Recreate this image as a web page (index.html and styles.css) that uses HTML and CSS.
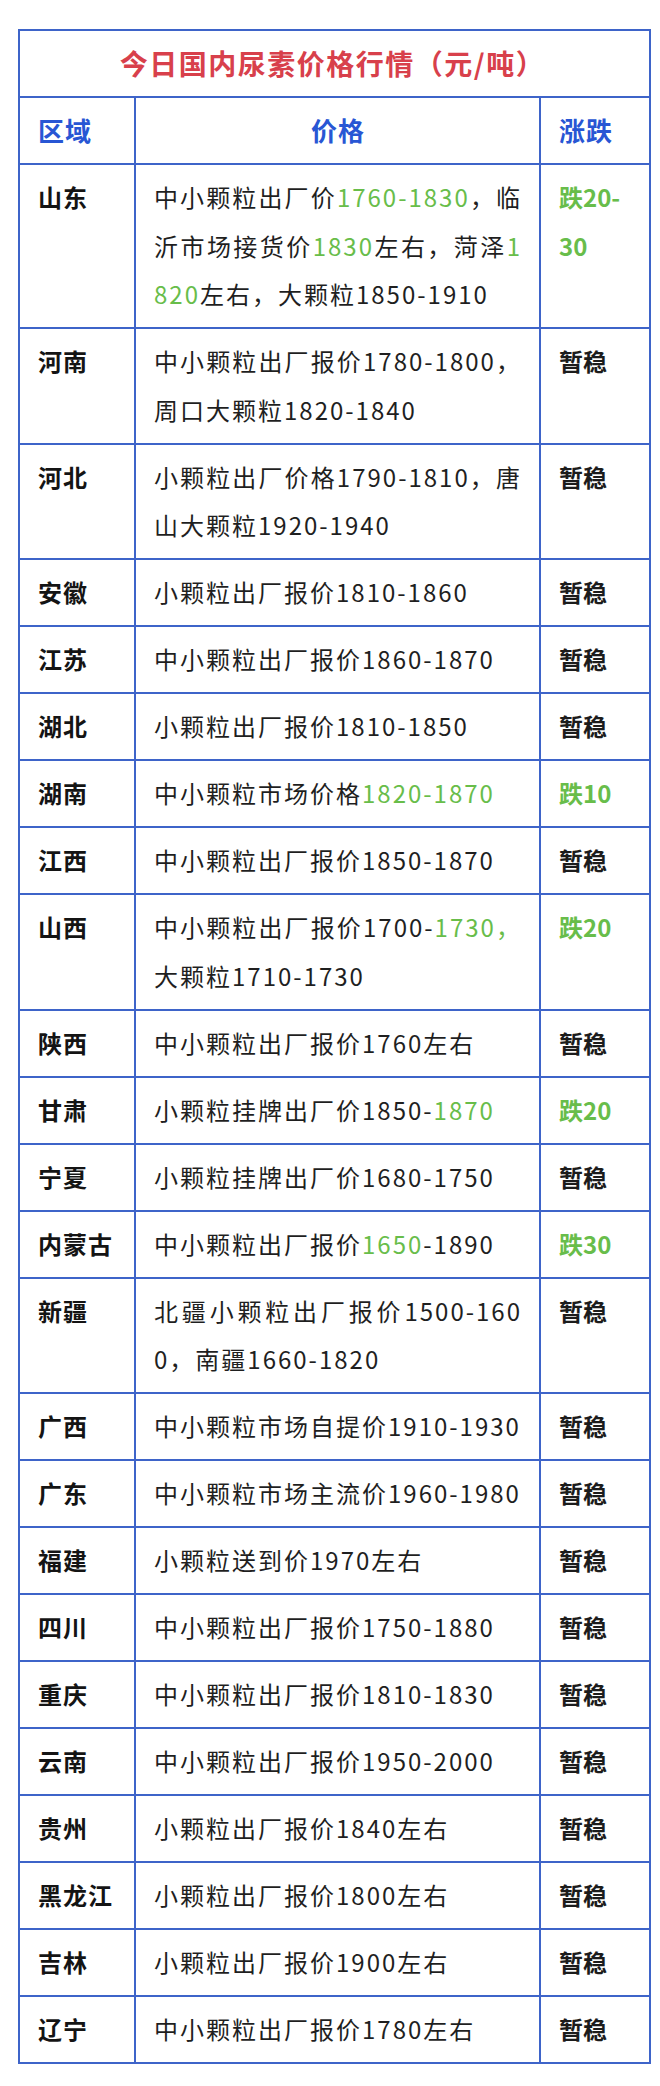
FILE: index.html
```html
<!DOCTYPE html>
<html lang="zh-CN">
<head>
<meta charset="utf-8">
<title>今日国内尿素价格行情</title>
<link rel="stylesheet" href="styles.css">
</head>
<body>
<div class="page">
<table class="price-table">
  <colgroup>
    <col class="c-region">
    <col class="c-price">
    <col class="c-change">
  </colgroup>
  <thead>
    <tr><th colspan="3" class="title">今日国内尿素价格行情（元/吨）</th></tr>
    <tr class="head">
      <th class="h-left">区域</th>
      <th class="h-center">价格</th>
      <th class="h-left">涨跌</th>
    </tr>
  </thead>
  <tbody>
    <tr><td class="region">山东</td><td class="price"><span class="ln">中小颗粒出厂价<span class="g">1760-1830</span>，临</span><span class="ln">沂市场接货价<span class="g">1830</span>左右，菏泽<span class="g">1</span></span><span class="g">820</span>左右，大颗粒1850-1910</td><td class="change down">跌20-<br>30</td></tr>
    <tr><td class="region">河南</td><td class="price"><span class="ln">中小颗粒出厂报价1780-1800，</span>周口大颗粒1820-1840</td><td class="change">暂稳</td></tr>
    <tr><td class="region">河北</td><td class="price"><span class="ln">小颗粒出厂价格1790-1810，唐</span>山大颗粒1920-1940</td><td class="change">暂稳</td></tr>
    <tr><td class="region">安徽</td><td class="price">小颗粒出厂报价1810-1860</td><td class="change">暂稳</td></tr>
    <tr><td class="region">江苏</td><td class="price">中小颗粒出厂报价1860-1870</td><td class="change">暂稳</td></tr>
    <tr><td class="region">湖北</td><td class="price">小颗粒出厂报价1810-1850</td><td class="change">暂稳</td></tr>
    <tr><td class="region">湖南</td><td class="price">中小颗粒市场价格<span class="g">1820-1870</span></td><td class="change down">跌10</td></tr>
    <tr><td class="region">江西</td><td class="price">中小颗粒出厂报价1850-1870</td><td class="change">暂稳</td></tr>
    <tr><td class="region">山西</td><td class="price"><span class="ln">中小颗粒出厂报价1700-<span class="g">1730，</span></span>大颗粒1710-1730</td><td class="change down">跌20</td></tr>
    <tr><td class="region">陕西</td><td class="price">中小颗粒出厂报价1760左右</td><td class="change">暂稳</td></tr>
    <tr><td class="region">甘肃</td><td class="price">小颗粒挂牌出厂价1850-<span class="g">1870</span></td><td class="change down">跌20</td></tr>
    <tr><td class="region">宁夏</td><td class="price">小颗粒挂牌出厂价1680-1750</td><td class="change">暂稳</td></tr>
    <tr><td class="region">内蒙古</td><td class="price">中小颗粒出厂报价<span class="g">1650</span>-1890</td><td class="change down">跌30</td></tr>
    <tr><td class="region">新疆</td><td class="price"><span class="ln">北疆小颗粒出厂报价1500-160</span>0，南疆1660-1820</td><td class="change">暂稳</td></tr>
    <tr><td class="region">广西</td><td class="price">中小颗粒市场自提价1910-1930</td><td class="change">暂稳</td></tr>
    <tr><td class="region">广东</td><td class="price">中小颗粒市场主流价1960-1980</td><td class="change">暂稳</td></tr>
    <tr><td class="region">福建</td><td class="price">小颗粒送到价1970左右</td><td class="change">暂稳</td></tr>
    <tr><td class="region">四川</td><td class="price">中小颗粒出厂报价1750-1880</td><td class="change">暂稳</td></tr>
    <tr><td class="region">重庆</td><td class="price">中小颗粒出厂报价1810-1830</td><td class="change">暂稳</td></tr>
    <tr><td class="region">云南</td><td class="price">中小颗粒出厂报价1950-2000</td><td class="change">暂稳</td></tr>
    <tr><td class="region">贵州</td><td class="price">小颗粒出厂报价1840左右</td><td class="change">暂稳</td></tr>
    <tr><td class="region">黑龙江</td><td class="price">小颗粒出厂报价1800左右</td><td class="change">暂稳</td></tr>
    <tr><td class="region">吉林</td><td class="price">小颗粒出厂报价1900左右</td><td class="change">暂稳</td></tr>
    <tr><td class="region">辽宁</td><td class="price">中小颗粒出厂报价1780左右</td><td class="change">暂稳</td></tr>
  </tbody>
</table>
</div>
</body>
</html>
```

FILE: styles.css
```css
html, body {
  margin: 0;
  padding: 0;
  background: #ffffff;
}

body {
  font-family: "Noto Sans CJK SC", "Noto Sans", sans-serif;
  color: #1c1c1c;
}

.page {
  padding: 29px 0 0 18px;
}

.price-table {
  width: 633px;
  table-layout: fixed;
  border-collapse: separate;
  border-spacing: 0;
  border-top: 2px solid #3e64c9;
  border-left: 2px solid #3e64c9;
  box-sizing: border-box;
}

.c-region { width: 116px; }
.c-price { width: 405px; }
.c-change { width: 110px; }

.price-table th,
.price-table td {
  box-sizing: border-box;
  border-right: 2px solid #3e64c9;
  border-bottom: 2px solid #3e64c9;
  padding: 8px 17px 8.5px 18px;
  line-height: 48.5px;
  vertical-align: top;
  text-align: left;
}

.title {
  font-size: 28px;
  font-weight: 700;
  letter-spacing: 1.5px;
  color: #d8404b;
  text-align: center !important;
  padding-right: 22px !important;
}

.head th {
  font-size: 26px;
  font-weight: 700;
  letter-spacing: 1px;
  color: #2856d4;
}

.head .h-center {
  text-align: center;
}

.region {
  font-size: 24px;
  font-weight: 700;
  letter-spacing: 1px;
  color: #141414;
  white-space: nowrap;
}

.price {
  font-size: 24px;
  letter-spacing: 2px;
  color: #1f1f1f;
}

.price .ln {
  display: block;
  white-space: nowrap;
  text-align: justify;
  text-align-last: justify;
}

.change {
  font-size: 24px;
  font-weight: 700;
  color: #1c1c1c;
  white-space: nowrap;
}

.change.down {
  color: #68bd4a;
}

.g {
  color: #68bd4a;
}
```
